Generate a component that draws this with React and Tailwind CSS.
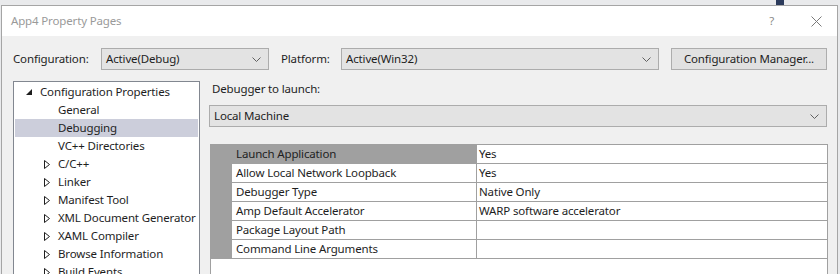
import React from "react";

const font = { fontFamily: '"Noto Sans", "Segoe UI", sans-serif' };

const Chevron = () => (
  <svg width="9" height="5" viewBox="0 0 9 5" className="shrink-0">
    <polyline points="0.5,0.5 4.5,4.5 8.5,0.5" fill="none" stroke="#606060" strokeWidth="1" />
  </svg>
);

const Combo = ({ value, className }) => (
  <div
    className={`h-[22px] flex items-center justify-between pl-[4px] pr-[7px] bg-[#e3e3e3] border border-[#acacac] ${className}`}
  >
    <span>{value}</span>
    <Chevron />
  </div>
);

const Collapsed = () => (
  <svg width="6" height="9" viewBox="0 0 6 9" className="shrink-0">
    <polygon points="0.5,0.5 5.5,4.5 0.5,8.5" fill="none" stroke="#1e1e1e" strokeWidth="1" />
  </svg>
);

const Expanded = () => (
  <svg width="6" height="6" viewBox="0 0 6 6" className="shrink-0">
    <polygon points="6,0 6,6 0,6" fill="#1e1e1e" />
  </svg>
);

const tree = [
  { label: "General" },
  { label: "Debugging", selected: true },
  { label: "VC++ Directories" },
  { label: "C/C++", arrow: true },
  { label: "Linker", arrow: true },
  { label: "Manifest Tool", arrow: true },
  { label: "XML Document Generator", arrow: true },
  { label: "XAML Compiler", arrow: true },
  { label: "Browse Information", arrow: true },
  { label: "Build Events", arrow: true },
];

const props = [
  ["Launch Application", "Yes", true],
  ["Allow Local Network Loopback", "Yes"],
  ["Debugger Type", "Native Only"],
  ["Amp Default Accelerator", "WARP software accelerator"],
  ["Package Layout Path", ""],
  ["Command Line Arguments", ""],
];

export default function App() {
  return (
    <div
      className="relative w-[840px] h-[274px] overflow-hidden bg-[#e9eaec] text-[11.5px] tracking-[-0.15px] text-[#1e1e1e] whitespace-nowrap"
      style={font}
    >
      {/* bit of a window behind */}
      <div className="absolute left-[776px] top-0 w-[8px] h-[5px] bg-[#2c3b5c]" />

      <div className="ml-[1px] mt-[5px] w-[837px] h-[300px] border border-[#a5a5a5] bg-[#f0f0f0]">
        {/* title bar */}
        <div className="h-[30px] bg-white flex items-center pl-[9px] pr-[15px]">
          <span className="text-[#9a9a9a]">App4 Property Pages</span>
          <span className="ml-auto text-[#8a8a8a] mr-[37px]">?</span>
          <svg width="11" height="11" viewBox="0 0 11 11">
            <path d="M0.5 0.5 L10.5 10.5 M10.5 0.5 L0.5 10.5" stroke="#7a7a7a" strokeWidth="1" />
          </svg>
        </div>

        {/* configuration row */}
        <div className="flex items-center mt-[12px] pl-[11px]">
          <span className="w-[88px]">Configuration:</span>
          <Combo value="Active(Debug)" className="w-[168px]" />
          <span className="ml-[12px] w-[60px]">Platform:</span>
          <Combo value="Active(Win32)" className="w-[318px]" />
          <div className="ml-[12px] w-[156px] h-[22px] flex items-center justify-center bg-[#e1e1e1] border border-[#adadad]">
            Configuration Manager...
          </div>
        </div>

        <div className="flex mt-[11px] pl-[11px]">
          {/* tree */}
          <div className="w-[187px] h-[200px] bg-white border border-[#828790] pt-[1px]">
            <div className="h-[18px] flex items-center pl-[11px] mx-[1px]">
              <Expanded />
              <span className="ml-[8px]">Configuration Properties</span>
            </div>
            {tree.map((t) => (
              <div
                key={t.label}
                className={`h-[18px] flex items-center mx-[1px] ${t.selected ? "bg-[#cccedb]" : ""}`}
              >
                <div className="w-[43px] flex justify-end pr-[8px]">{t.arrow && <Collapsed />}</div>
                <span>{t.label}</span>
              </div>
            ))}
          </div>

          {/* right side */}
          <div className="ml-[9px] w-[618px]">
            <div className="h-[24px] pl-[3px] leading-[16px]">Debugger to launch:</div>
            <Combo value="Local Machine" className="w-[618px]" />
            <div className="mt-[17px] ml-[1px] w-[618px] h-[140px] bg-white border border-[#a0a0a0]">
              <div className="flex flex-col gap-px pb-px bg-[#a0a0a0]">
                {props.map(([name, value, selected]) => (
                  <div key={name} className="flex h-[18px]">
                    <div className="w-[21px]" />
                    <div
                      className={`w-[244px] pl-[4px] flex items-center ${selected ? "" : "bg-white"}`}
                    >
                      {name}
                    </div>
                    <div className="ml-px flex-1 bg-white pl-[2px] flex items-center">{value}</div>
                  </div>
                ))}
              </div>
            </div>
          </div>
        </div>
      </div>
    </div>
  );
}
